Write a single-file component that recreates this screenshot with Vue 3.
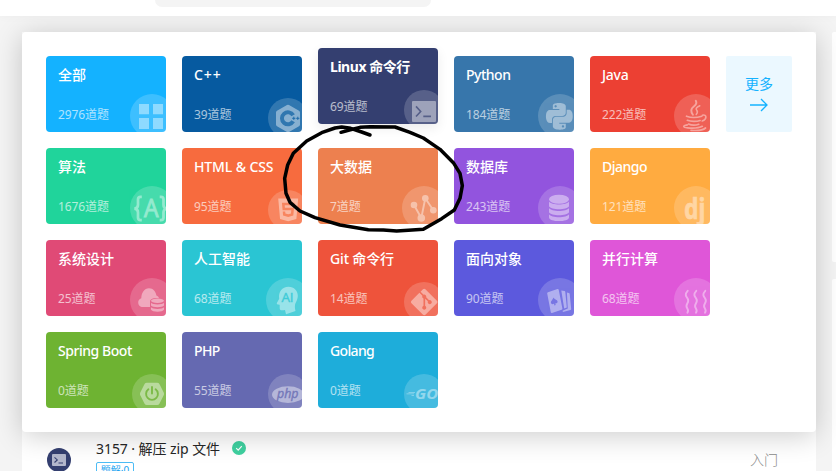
<script setup>
const cards = [
  { id: 'all', name: '全部', count: 2976, color: '#14b2ff' },
  { id: 'cpp', name: 'C++', count: 39, color: '#065aa0', small: true, spacing: 0.9 },
  { id: 'linux', name: 'Linux 命令行', count: 69, color: '#343f70', small: true, active: true, spacing: -0.45 },
  { id: 'python', name: 'Python', count: 184, color: '#3776ab', spacing: -0.5 },
  { id: 'java', name: 'Java', count: 222, color: '#ec4033', spacing: -0.25 },
  { id: 'algo', name: '算法', count: 1676, color: '#20d49b' },
  { id: 'html', name: 'HTML & CSS', count: 95, color: '#f76b3e', small: true, spacing: -0.12 },
  { id: 'bigdata', name: '大数据', count: 7, color: '#ed804f' },
  { id: 'db', name: '数据库', count: 243, color: '#9254de' },
  { id: 'django', name: 'Django', count: 121, color: '#ffab40', spacing: -0.5 },
  { id: 'system', name: '系统设计', count: 25, color: '#e04a76' },
  { id: 'ai', name: '人工智能', count: 68, color: '#2ac5d3' },
  { id: 'git', name: 'Git 命令行', count: 14, color: '#ee533b', small: true, spacing: -0.15 },
  { id: 'oop', name: '面向对象', count: 90, color: '#5c59dd' },
  { id: 'parallel', name: '并行计算', count: 68, color: '#df56d8' },
  { id: 'spring', name: 'Spring Boot', count: 0, color: '#6eb332', small: true, spacing: -0.45 },
  { id: 'php', name: 'PHP', count: 55, color: '#6569b1', small: true, spacing: -0.6 },
  { id: 'go', name: 'Golang', count: 0, color: '#1eadda', small: true, spacing: -0.65 },
]
</script>

<template>
  <div class="page">
    <header class="topbar"><div class="search"></div></header>

    <div class="content">
      <section class="list">
        <div class="row">
          <svg class="avatar" viewBox="0 0 24 24">
            <circle cx="12" cy="12" r="12" fill="#343f70" />
            <rect x="5" y="6" width="14" height="12" rx="1" fill="#b3b7cc" />
            <path d="M7.5 9.3l2.8 2.6-2.8 2.6M11.5 15h4.5" fill="none" stroke="#343f70" stroke-width="1.1" />
          </svg>
          <div class="info">
            <div class="title">
              <span>3157 · 解压 zip 文件</span>
              <svg class="check" viewBox="0 0 14 14">
                <circle cx="7" cy="7" r="7" fill="#3fd1a0" />
                <path d="M4.2 7.1l2 2 3.6-4" fill="none" stroke="#fff" stroke-width="1.2" />
              </svg>
            </div>
            <span class="tag">题解·0</span>
          </div>
          <span class="level">入门</span>
        </div>
      </section>
      <aside class="side">
        <div class="side-card first"></div>
        <div class="side-card rest"></div>
      </aside>
    </div>

    <div class="panel">
      <div class="grid">
        <div
          v-for="c in cards"
          :key="c.id"
          class="card"
          :class="{ active: c.active }"
          :style="{ backgroundColor: c.color }"
        >
          <div class="name" :style="{ letterSpacing: (c.spacing || 0) + 'px' }">{{ c.name }}</div>
          <div class="count">{{ c.count }}道题</div>
          <div class="badge" :class="{ small: c.small }">
            <svg :viewBox="c.small ? '86 42 40 40' : '84 38 44 44'" fill="#fff">
              <path v-if="c.id === 'all'" d="M93 48h10v10.300H93zM107 48h10v10.300h-10zM93 62h10v11H93zM107 62h10v11h-10z" />
              <template v-else-if="c.id === 'cpp'">
                <path fill-rule="evenodd" d="M105 49q1-.6 2 0l10 5.800q1 .6 1 1.700v12q0 1.100-1 1.700l-10 5.700q-1 .6-2 0l-10-5.700q-1-.6-1-1.700v-12q0-1.100 1-1.700zM112.900 58.300a8 8 0 1 0 0 8l-3.500-2a4 4 0 1 1 0-4z" />
                <path d="M110.200 62.300h3.200M111.800 60.700v3.200M114.200 62.300h3.200M115.800 60.700v3.200" :stroke="c.color" stroke-width="1" />
              </template>
              <path v-else-if="c.id === 'linux'" fill-rule="evenodd" d="M95 53h22q1 0 1 1v19q0 1-1 1H95q-1 0-1-1V54q0-1 1-1zM97.400 58.900l4.200 4.500-4.200 4.500 1.200 1.100 5.200-5.600-5.200-5.600zM105.300 67.600v1.600h7.700v-1.600z" />
              <path v-else-if="c.id === 'python'" transform="translate(92 47) scale(1.11)" d="M14.25.18l.9.2.73.26.59.3.45.32.34.34.25.34.16.33.1.3.04.26.02.2-.01.13V8.500l-.05.63-.13.55-.21.46-.26.38-.3.31-.33.25-.35.19-.35.14-.33.1-.3.07-.26.04-.21.02H8.770l-.69.05-.59.14-.5.22-.41.27-.33.32-.27.35-.2.36-.15.37-.1.35-.07.32-.04.27-.02.21v3.060H3.170l-.21-.03-.28-.07-.32-.12-.35-.18-.36-.26-.36-.36-.35-.46-.32-.59-.28-.73-.21-.88-.14-1.050-.05-1.230.06-1.220.16-1.040.24-.87.32-.71.36-.57.4-.44.42-.33.42-.24.4-.16.36-.1.32-.05.24-.01h.16l.06.01h8.160v-.83H6.180l-.01-2.750-.02-.37.05-.34.11-.31.17-.28.25-.26.31-.23.38-.2.44-.18.51-.15.58-.12.64-.1.71-.06.77-.04.84-.02 1.270.05zm-6.300 1.980l-.23.33-.08.41.08.41.23.34.33.22.41.09.41-.09.33-.22.23-.34.08-.41-.08-.41-.23-.33-.33-.22-.41-.09-.41.09zm13.090 3.950l.28.06.32.12.35.18.36.27.36.35.35.47.32.59.28.73.21.88.14 1.040.05 1.230-.06 1.230-.16 1.040-.24.86-.32.71-.36.57-.4.45-.42.33-.42.24-.4.16-.36.09-.32.05-.24.02-.16-.01h-8.220v.82h5.840l.01 2.760.02.36-.05.34-.11.31-.17.29-.25.25-.31.24-.38.2-.44.17-.51.15-.58.13-.64.09-.71.07-.77.04-.84.01-1.270-.04-1.070-.14-.9-.2-.73-.25-.59-.3-.45-.33-.34-.34-.25-.34-.16-.33-.1-.3-.04-.25-.02-.2.01-.13v-5.340l.05-.64.13-.54.21-.46.26-.38.3-.32.33-.24.35-.2.35-.14.33-.1.3-.06.26-.04.21-.02.13-.01h5.840l.69-.05.59-.14.5-.21.41-.28.33-.32.27-.35.2-.36.15-.36.1-.35.07-.32.04-.28.02-.21V6.070h2.090l.14.01zm-6.470 14.250l-.23.33-.08.41.08.41.23.33.33.23.41.08.41-.08.33-.23.23-.33.08-.41-.08-.41-.23-.33-.33-.23-.41-.08-.41.08z" />
              <g v-else-if="c.id === 'java'" fill="none" stroke="#fff" stroke-linecap="round">
                <path stroke-width="1.900" d="M105.800 44.800q1.800 3-2.300 6t-.6 8" />
                <path stroke-width="1.500" d="M109.800 49.800q-5 2.200-3.200 4.200t-.4 4.500" />
                <path stroke-width="1.600" d="M96.500 60.200c4 1.500 11 1.300 15.300 0M97.300 64.300c3.500 1.500 9.500 1.400 12.800.2M98.500 68c3 1.300 7.500 1.200 10.300.2M112.500 59.200c4.500-1.200 4.700 4.200-.3 5.800" />
                <path stroke-width="1.700" d="M97.300 68.800c-5 .8-4.500 2.700.2 3.100 5.500.5 11.500.2 14.800-1.600M101 74.300c5.500.5 12-.1 14.500-2.300" />
              </g>
              <g v-else-if="c.id === 'algo'" fill="none" stroke="#fff" stroke-width="2.700">
                <path d="M95.800 48.800h-1.200q-2.600 0-2.600 2.600v5.300q0 3.600-3.600 3.900 3.600.3 3.600 3.900v5q0 2.600 2.600 2.600h1.200M113.700 48.800h1.200q2.600 0 2.600 2.600v5.300q0 3.600 3.600 3.900-3.600.3-3.600 3.900v5q0 2.600-2.600 2.600h-1.200" />
                <text class="glyph" x="98" y="69.300" font-size="25" fill="#fff" stroke="#fff" stroke-width=".9" textLength="14.500" lengthAdjust="spacingAndGlyphs">A</text>
              </g>
              <path v-else-if="c.id === 'html'" transform="translate(94.800 50.500) scale(.95)" d="M1.500 0h21l-1.910 21.563L11.977 24l-8.564-2.438L1.500 0zm7.031 9.750l-.232-2.718 10.059.003.23-2.622L5.412 4.410l.698 8.010h9.126l-.326 3.426-2.910.804-2.955-.81-.188-2.110H6.248l.33 4.171L12 19.351l5.379-1.443.744-8.157H8.531z" />
              <g v-else-if="c.id === 'bigdata'">
                <path d="M96 57l7.300 13 4-19.800 8 12.100" fill="none" stroke="#fff" stroke-width="1.900" />
                <circle cx="96" cy="57" r="3.300" /><circle cx="107.300" cy="50.200" r="3.300" />
                <circle cx="103.300" cy="70" r="3.800" /><circle cx="115.300" cy="62.300" r="3.300" />
              </g>
              <g v-else-if="c.id === 'db'">
                <ellipse cx="105" cy="51.200" rx="10" ry="4.500" />
                <path d="M95 53.500c2 4 18 4 20 0v4.700c-2 4-18 4-20 0zM95 60c2 4 18 4 20 0v4.300c-2 4-18 4-20 0zM95 66.200c2 4 18 4 20 0v3c0 5.200-20 5.200-20 0z" />
              </g>
              <text v-else-if="c.id === 'django'" class="glyph heavy" x="94.300" y="70.500" font-size="28" stroke="#fff" stroke-width=".7" textLength="21" lengthAdjust="spacingAndGlyphs">dj</text>
              <g v-else-if="c.id === 'system'">
                <path d="M97 67c-5.500 0-6.500-7.200-1.700-8.700.2-5.500 3-10 7.700-10 4.300 0 6.800 3.300 7.400 7.300q2.100.8 2.700 2.700c-5-.8-9.100.6-9.100 3.200V67z" />
                <ellipse cx="111.500" cy="60.800" rx="6.500" ry="2.200" />
                <path d="M105 62.700c1.500 2.300 11.500 2.300 13 0v2.800c-1.500 2.300-11.500 2.300-13 0zM105 67.200c1.500 2.300 11.500 2.300 13 0v2.300c-1.500 3-11.500 3-13 0z" />
              </g>
              <g v-else-if="c.id === 'ai'">
                <path d="M106.500 46.700c5.700 0 9.300 4 9.300 9 0 4.300-2.300 6.300-2.800 9.300-.3 2 0 4.200.5 6L104 74.300l-1-4.200c-3.300.5-5.300.4-5.300-1.900v-3.500c-2.500-.2-3.500-.7-2.700-2l2.200-4c-1-6.700 2.800-12 9.300-12z" />
                <text class="glyph" x="99.500" y="61.700" font-size="13.500" :fill="c.color" :stroke="c.color" stroke-width=".4" textLength="12" lengthAdjust="spacing">AI</text>
              </g>
              <path v-else-if="c.id === 'git'" transform="translate(93 48.800) scale(1.1)" d="M23.546 10.930L13.067.452c-.604-.603-1.582-.603-2.188 0L8.708 2.627l2.760 2.760c.645-.215 1.379-.07 1.889.441.516.515.658 1.258.438 1.900l2.658 2.660c.645-.223 1.387-.078 1.900.435.721.72.721 1.884 0 2.604-.719.719-1.881.719-2.600 0-.539-.541-.674-1.337-.404-1.996L12.860 8.955v6.525c.176.086.342.203.488.348.713.721.713 1.883 0 2.600-.719.721-1.889.721-2.609 0-.719-.719-.719-1.879 0-2.598.182-.18.387-.316.605-.406V8.835c-.217-.091-.424-.222-.6-.401-.545-.545-.676-1.342-.396-2.009L7.636 3.700.45 10.881c-.6.605-.6 1.584 0 2.189l10.480 10.477c.604.604 1.582.604 2.186 0l10.430-10.430c.605-.603.605-1.582 0-2.187" />
              <g v-else-if="c.id === 'oop'">
                <path fill-rule="evenodd" d="M94 52.200l9.500-3.200q1-.2 1.200.8l3.700 18.700q.2 1-.8 1.300L98 73q-1 .2-1.200-.8L93.200 53.500q-.2-1 .8-1.300zM99.300 57.500c-.3 2.300-3 3.500-2.200 5.700.6 1.400 2.200 1.300 3 .3l.2 2 1.500-.4-.8-1.800c1 .5 2.500 0 2.600-1.500 0-2-2.900-2.300-4.300-4.300z" />
                <path d="M107.300 50.500l3.100.6q.8.1.9 1l1.500 15.400-2.600 1zM112.900 52.500l1.900.4q.8.1.9 1l1.500 15q0 .8-.8 1.100l-7.500 2-.3-1.300 5.200-2.300z" />
              </g>
              <g v-else-if="c.id === 'parallel'" fill="none" stroke="#fff" stroke-width="1.900" stroke-linecap="round">
                <path v-for="x in [96.700, 105.300, 114.300]" :key="x" :transform="`translate(${x} 50.800)`" d="M1 0c-3.500 4-1.500 5.500 0 8 1.200 2 .8 2.800-.4 4.700-1.300 2-1.300 3-.1 4.800 1.100 1.600 1.300 2.800.2 4.500" />
              </g>
              <g v-else-if="c.id === 'spring'">
                <path d="M100.800 50.700h10.400q1.500 0 2.200 1.300l4.300 8.600q.6 1.300 0 2.600l-4.300 8.500q-.7 1.300-2.200 1.300h-10.400q-1.500 0-2.200-1.300l-4.300-8.500q-.6-1.300 0-2.600l4.300-8.600q.7-1.300 2.200-1.300z" />
                <path d="M102.400 57.300a5.900 5.900 0 1 0 7.200 0M106 55v6.500" fill="none" :stroke="c.color" stroke-width="1.900" stroke-linecap="round" />
              </g>
              <g v-else-if="c.id === 'php'">
                <ellipse cx="106" cy="62.600" rx="16" ry="8.400" />
                <text class="glyph slant" x="95" y="65.800" font-size="12.500" :fill="c.color" :stroke="c.color" stroke-width=".4" textLength="21.500" lengthAdjust="spacingAndGlyphs">php</text>
              </g>
              <g v-else>
                <text class="glyph heavy slant" x="97" y="67" font-size="13.500" textLength="23" lengthAdjust="spacingAndGlyphs">GO</text>
                <path d="M90.500 60h6.500v.8h-6.500zM88.500 61.500h7.500v.8h-7.500zM93.500 63h2.500v.8h-2.500z" />
              </g>
            </svg>
          </div>
        </div>
      </div>
      <div class="more">
        <span>更多</span>
        <svg viewBox="0 0 20 14"><path d="M1 7h17M12 1l6 6-6 6" fill="none" stroke="#14b2ff" stroke-width="1.300" /></svg>
      </div>
    </div>

    <svg class="ink" viewBox="0 0 570 375">
      <path d="M183 52L208 45L240 37L270 35L345 36L390 52L430 69L480 103L520 143L540 175L547 212L540 250L523 285L485 311L430 343L385 346L350 348L310 345L265 344L180 330L105 308L60 288L30 262L18 235L14 190L23 150L40 115L80 78L125 53L165 39L185 36L212 40L245 51L270 60" />
    </svg>
  </div>
</template>

<style>
body { margin: 0; overflow: hidden; }
</style>

<style scoped>
.page {
  position: relative;
  width: 836px;
  height: 471px;
  overflow: hidden;
  background: #f4f4f4;
  font-family: "Noto Sans", "Noto Sans CJK SC", sans-serif;
}
.topbar {
  position: relative;
  z-index: 3;
  height: 16px;
  background: #fff;
  box-shadow: 0 1px 8px rgba(0, 0, 0, .03);
}
.search {
  width: 276px;
  height: 7px;
  margin-left: 155px;
  border-radius: 0 0 14px 14px;
  background: #f4f4f4;
}
.content {
  display: flex;
  gap: 16px;
  padding: 16px 0 0 22px;
}
.list {
  width: 794px;
  height: 439px;
  background: #fff;
  display: flex;
  flex-direction: column;
  justify-content: flex-end;
}
.row {
  display: flex;
  align-items: flex-start;
  height: 34px;
  padding: 0 38px 0 25px;
}
.avatar { width: 24px; height: 24px; margin-top: 11px; }
.info { flex: 1; margin-left: 25px; }
.title {
  display: flex;
  align-items: center;
  gap: 12px;
  height: 22px;
  font-size: 14px;
  letter-spacing: -.07px;
  color: #262626;
  white-space: nowrap;
}
.check { width: 14px; height: 14px; }
.tag {
  display: block;
  box-sizing: border-box;
  width: 38px;
  height: 18px;
  margin-top: 3px;
  border: 1px solid #4cbcf5;
  border-radius: 2px;
  font-size: 10px;
  line-height: 14px;
  text-align: center;
  color: #14a2f0;
}
.level { margin-top: 13px; font-size: 14px; line-height: 20px; color: #8c8c8c; font-weight: 300; }
.side { width: 4px; flex: none; }
.side-card { background: #fff; width: 20px; border-radius: 2px; }
.first { height: 230px; margin-bottom: 17px; }
.rest { height: 200px; }

.panel {
  position: absolute;
  z-index: 2;
  left: 22px;
  top: 32px;
  box-sizing: border-box;
  width: 794px;
  height: 400px;
  padding: 24px;
  display: flex;
  align-items: flex-start;
  gap: 16px;
  background: #fff;
  border-radius: 4px;
  box-shadow: 0 4px 28px rgba(0, 0, 0, .2);
}
.grid {
  display: grid;
  grid-template-columns: repeat(5, 120px);
  grid-auto-rows: 76px;
  gap: 16px;
}
.card {
  position: relative;
  overflow: hidden;
  box-sizing: border-box;
  padding: 9px 12px 7px;
  display: flex;
  flex-direction: column;
  justify-content: space-between;
  border-radius: 4px;
  color: #fff;
  white-space: nowrap;
}
.active {
  transform: translateY(-8px);
  box-shadow: 0 4px 12px rgba(0, 0, 0, .08);
}
.name { font-size: 14px; line-height: 20px; font-weight: 500; }
.active .name { font-weight: 700; }
.count { font-size: 12px; line-height: 20px; opacity: .65; letter-spacing: -.1px; }
.badge {
  position: absolute;
  right: -8px;
  bottom: -6px;
  width: 44px;
  height: 44px;
  border-radius: 50%;
  background: rgba(255, 255, 255, .175);
}
.badge.small { right: -6px; width: 40px; height: 40px; }
.badge svg { display: block; width: 100%; height: 100%; opacity: .42; overflow: visible; }
.glyph { font-family: "Open Sans", "Noto Sans", sans-serif; }
.heavy { font-weight: 700; }
.slant { font-style: italic; }
.more {
  width: 66px;
  height: 76px;
  display: flex;
  flex-direction: column;
  align-items: center;
  box-sizing: border-box;
  padding-top: 18px;
  background: #ebf8ff;
  border-radius: 2px;
  color: #14b2ff;
  font-size: 14px;
  line-height: 20px;
}
.more svg { width: 20px; height: 14px; margin-top: 4px; }
.ink {
  position: absolute;
  z-index: 4;
  left: 280px;
  top: 115px;
  width: 190px;
  height: 125px;
  fill: none;
  stroke: #000;
  stroke-width: 10.500;
  stroke-linecap: round;
  stroke-linejoin: round;
}
</style>
